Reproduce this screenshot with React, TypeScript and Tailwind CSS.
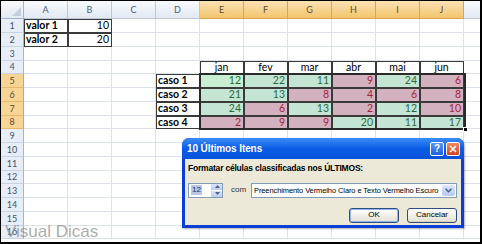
import React from "react";

const cols = ["A", "B", "C", "D", "E", "F", "G", "H", "I", "J", ""];
const months = ["jan", "fev", "mar", "abr", "mai", "jun"];

// valores da tabela (linhas 5 a 8) e se ficam verdes (true) ou vermelhos
const data: [number, boolean][][] = [
  [[12, true], [22, true], [11, true], [9, false], [24, true], [6, false]],
  [[21, true], [13, true], [8, false], [4, false], [6, false], [8, false]],
  [[24, true], [6, false], [13, true], [2, false], [12, true], [10, false]],
  [[2, false], [9, false], [9, false], [20, true], [11, true], [17, true]],
];

const gridLine = "border-r border-b border-[#dbe2ec]";
const boxed = "border-r border-b border-[#3a3a3a] shadow-[inset_1px_1px_0_#3a3a3a]";

function cellFor(r: number, c: number) {
  let text = "";
  let cls = gridLine;
  let align = "justify-start";
  let extra = "text-black";

  if ((r === 1 || r === 2) && c <= 1) {
    cls = boxed;
    if (c === 0) {
      text = r === 1 ? "valor 1" : "valor 2";
      extra = "font-bold text-black";
    } else {
      text = r === 1 ? "10" : "20";
      align = "justify-end";
    }
  }
  if (r === 4 && c >= 4 && c <= 9) {
    cls = boxed;
    text = months[c - 4];
    align = "justify-center";
  }
  if (r >= 5 && r <= 8 && c === 3) {
    cls = boxed;
    text = "caso " + (r - 4);
    extra = "font-bold text-black";
  }
  if (r >= 5 && r <= 8 && c >= 4 && c <= 9) {
    const [v, ok] = data[r - 5][c - 4];
    cls = boxed;
    text = String(v);
    align = "justify-end";
    if (r === 5 && c === 4) extra = "bg-[#c9efd2] text-[#1f6b2c]";
    else extra = ok ? "bg-[#c4e4d4] text-[#2c6a3b]" : "bg-[#d3b1be] text-[#a3243a]";
  }
  return { text, cls, align, extra };
}

function ColHeader({ label, sel }: { label: string; sel: boolean }) {
  return (
    <div
      className={
        "w-[44px] shrink-0 h-full flex items-center justify-center border-r border-b text-[9px] " +
        (sel
          ? "bg-gradient-to-b from-[#fbe2b4] to-[#f3c56b] border-[#d9a552] text-[#5b4a2a]"
          : "bg-gradient-to-b from-[#f8fafd] to-[#e2e9f3] border-[#b9c8da] text-[#4a5d78]")
      }
    >
      {label}
    </div>
  );
}

function XpButton({ label, def }: { label: string; def?: boolean }) {
  return (
    <div
      className={
        "w-[50px] h-[15px] rounded-[3px] border border-[#2d4e7e] bg-gradient-to-b from-white to-[#e3e0d2] flex items-center justify-center text-[8px] text-black " +
        (def ? "shadow-[inset_0_0_0_1px_#8fb3f0]" : "shadow-[inset_0_-1px_0_#d6d0bd]")
      }
    >
      {label}
    </div>
  );
}

export default function App() {
  const rows = Array.from({ length: 16 }, (_, i) => i + 1);

  return (
    <div
      className="w-[482px] h-[244px] relative overflow-hidden bg-white border-t border-l border-r-2 border-b-2 border-black"
      style={{ fontFamily: "Lato, 'Liberation Sans', sans-serif" }}
    >
      <div className="relative">
        {/* cabeçalho das colunas */}
        <div className="flex h-[18px]">
          <div className="w-[23px] shrink-0 h-full relative border-r border-b border-[#9eb6ce] bg-gradient-to-b from-[#f8fafd] to-[#e2e9f3]">
            <div className="absolute right-[2px] bottom-[2px] w-0 h-0 border-l-[9px] border-l-transparent border-b-[9px] border-b-[#c3cfdf]" />
          </div>
          {cols.map((c, i) => (
            <ColHeader key={i} label={c} sel={i >= 4 && i <= 9} />
          ))}
        </div>

        {rows.map((r) => (
          <div key={r} className={"flex " + (r % 4 === 0 ? "h-[13px]" : "h-[14px]")}>
            <div
              className={
                "w-[23px] shrink-0 h-full flex items-center justify-center border-r border-b text-[9px] " +
                (r >= 5 && r <= 8
                  ? "bg-[#f7d597] border-r-[#d9a552] border-b-[#e6b867] text-[#5b4a2a]"
                  : "bg-[#e8eef7] border-r-[#9eb6ce] border-b-[#c7d3e2] text-[#3f5270]")
              }
            >
              {r}
            </div>
            {cols.map((_, c) => {
              const cell = cellFor(r, c);
              return (
                <div
                  key={c}
                  className={
                    "w-[44px] shrink-0 h-full flex items-center px-[2px] text-[10.5px] leading-none " +
                    cell.cls + " " + cell.align + " " + cell.extra
                  }
                >
                  {cell.text}
                </div>
              );
            })}
          </div>
        ))}

        {/* seleção E5:J8 */}
        <div className="absolute left-[198px] top-[72px] w-[267px] h-[57px] border-2 border-[#2a2a2a]" />
        <div className="absolute left-[462px] top-[126px] w-[5px] h-[5px] bg-black border border-white" />
      </div>

      {/* janela 10 Últimos Itens */}
      <div
        className="absolute left-[181px] top-[137px] w-[282px] h-[90px] rounded-t-[7px] bg-[#0a3fd6] flex flex-col shadow-[1px_1px_2px_rgba(0,0,0,0.3)]"
        style={{ fontFamily: "Tahoma, 'Liberation Sans', sans-serif" }}
      >
        <div className="h-[21px] shrink-0 rounded-t-[7px] bg-gradient-to-b from-[#3b8cf7] via-[#0b5ce6] to-[#0753da] flex items-center pl-[5px] pr-[4px]">
          <span className="text-white font-bold text-[10px] tracking-[-0.1px] flex-1">10 Últimos Itens</span>
          <div className="w-[14px] h-[14px] rounded-[2px] border border-white bg-gradient-to-b from-[#5a95f5] to-[#1c5fe0] flex items-center justify-center text-white font-bold text-[10px] leading-none">
            ?
          </div>
          <div className="ml-[2px] w-[14px] h-[14px] rounded-[2px] border border-white bg-gradient-to-b from-[#ef8a5e] to-[#d4411f] flex items-center justify-center">
            <svg width="8" height="8" viewBox="0 0 8 8">
              <path d="M1 1 L7 7 M7 1 L1 7" stroke="white" strokeWidth="1.6" />
            </svg>
          </div>
        </div>
        <div className="flex-1 mx-[3px] mb-[3px] bg-[#ece9d8] flex flex-col pl-[3px] pr-[4px]">
          <div className="pt-[3px] text-[8.5px] font-bold text-black tracking-[-0.2px]">
            Formatar células classificadas nos ÚLTIMOS:
          </div>
          <div className="mt-[8px] flex items-center">
            <div className="w-[35px] h-[15px] border border-[#7f9db9] bg-white flex items-center">
              <span className="ml-[2px] px-[1px] bg-[#b8c6e2] text-[#1b2f6e] text-[8px] leading-[10px]">12</span>
              <div className="ml-auto w-[11px] h-full flex flex-col border-l border-[#c9d7f5]">
                <div className="flex-1 bg-gradient-to-b from-[#dce6fd] to-[#bcccf3] flex items-center justify-center border-b border-white">
                  <svg width="5" height="3" viewBox="0 0 5 3"><path d="M0 3 L2.5 0 L5 3 Z" fill="#4d6185" /></svg>
                </div>
                <div className="flex-1 bg-gradient-to-b from-[#dce6fd] to-[#bcccf3] flex items-center justify-center">
                  <svg width="5" height="3" viewBox="0 0 5 3"><path d="M0 0 L2.5 3 L5 0 Z" fill="#4d6185" /></svg>
                </div>
              </div>
            </div>
            <span className="ml-[8px] text-[8px] text-[#333]">com</span>
            <div className="ml-auto w-[206px] h-[15px] border border-[#7f9db9] bg-white flex items-center">
              <span className="pl-[2px] text-[7.5px] text-black tracking-[-0.1px] whitespace-nowrap flex-1 overflow-hidden">
                Preenchimento Vermelho Claro e Texto Vermelho Escuro
              </span>
              <div className="mr-[1px] w-[13px] h-[11px] rounded-[2px] bg-gradient-to-b from-[#dce6fd] to-[#b6c8f5] flex items-center justify-center">
                <svg width="7" height="5" viewBox="0 0 7 5"><path d="M0.5 0.8 L3.5 3.8 L6.5 0.8" stroke="#4d6185" strokeWidth="1.5" fill="none" /></svg>
              </div>
            </div>
          </div>
          <div className="mt-[10px] flex justify-end gap-[8px]">
            <XpButton label="OK" def />
            <XpButton label="Cancelar" />
          </div>
        </div>
      </div>

      {/* marca d'água */}
      <div
        className="absolute left-[4px] top-[222px] text-[17px] leading-none text-[#8f8f8f]/75"
        style={{ fontFamily: "'Liberation Sans', sans-serif" }}
      >
        Visual Dicas
      </div>
    </div>
  );
}
